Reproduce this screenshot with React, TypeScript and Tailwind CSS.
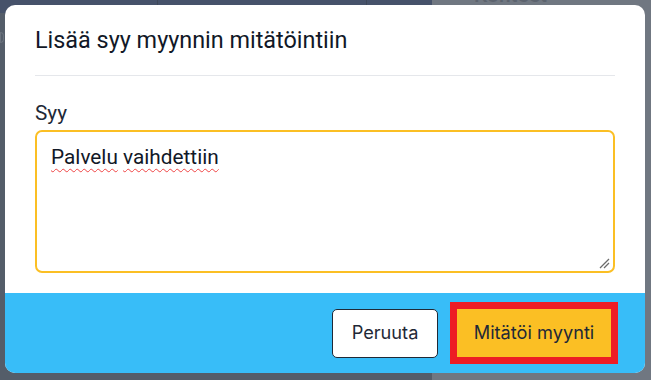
export default function App() {
  return (
    <div className="relative h-[380px] w-[651px] overflow-hidden font-['Roboto',sans-serif]">
      {/* dimmed app behind the dialog */}
      <div className="flex h-full w-full">
        <div className="flex w-[432px] flex-col bg-[#545d69]">
          <div className="flex h-[13px] bg-[#46526a]">
            <div className="w-[158px] border-r border-[#3e4858]" />
            <div className="w-[209px] border-r border-[#3e4858]" />
            <div className="flex-1" />
          </div>
          <div className="mt-[19px] h-[11px] w-[4px] rounded-r-sm border border-[#6a727d]" />
        </div>
        <div className="flex-1 bg-[#707781] pl-[42px]">
          <div className="-mt-[18px] text-[21px] font-medium leading-[26px] text-[#5c636e]">Kohteet</div>
        </div>
      </div>

      <div className="absolute left-[5px] top-[5px] flex h-[368px] w-[640px] flex-col overflow-hidden rounded-[10px] bg-white">
        <div className="px-[30px] pt-[17px]">
          <h2 className="text-[23.4px] leading-[36px] text-[#111827]">Lisää syy myynnin mitätöintiin</h2>
          <div className="mt-[17px] h-px bg-[#e5e7eb]" />
        </div>

        <div className="flex-1 px-[30px] pt-[24px]">
          <label className="mb-[4px] block text-[20.8px] leading-[26px] text-[#1f2937]">Syy</label>
          <div className="relative h-[143px] rounded-[7px] border-2 border-[#fbbf24] px-[14px] pt-[10px] text-[20.8px] leading-[31px] text-[#111827]">
            <span className="underline decoration-[#ef4444] decoration-wavy decoration-1 underline-offset-[4px]">Palvelu</span>{" "}
            <span className="underline decoration-[#ef4444] decoration-wavy decoration-1 underline-offset-[4px]">vaihdettiin</span>
            <svg className="absolute bottom-[2px] right-[3px]" width="11" height="11" viewBox="0 0 11 11">
              <path d="M1 10 L10 1 M5 10 L10 5" stroke="#6b6b6b" strokeWidth="1.3" />
            </svg>
          </div>
        </div>

        <div className="flex h-[80px] items-center justify-end gap-[19px] bg-[#38bdf8] pr-[34px] font-['Inter',sans-serif] text-[18.2px] text-[#1f2937]">
          <button className="h-[49px] w-[106px] rounded-[5px] border border-[#1f2937] bg-white">Peruuta</button>
          <button className="h-[48px] w-[154px] bg-[#fbbf24] outline-[7px] outline-solid outline-[#ed1c24]">Mitätöi myynti</button>
        </div>
      </div>
    </div>
  );
}
